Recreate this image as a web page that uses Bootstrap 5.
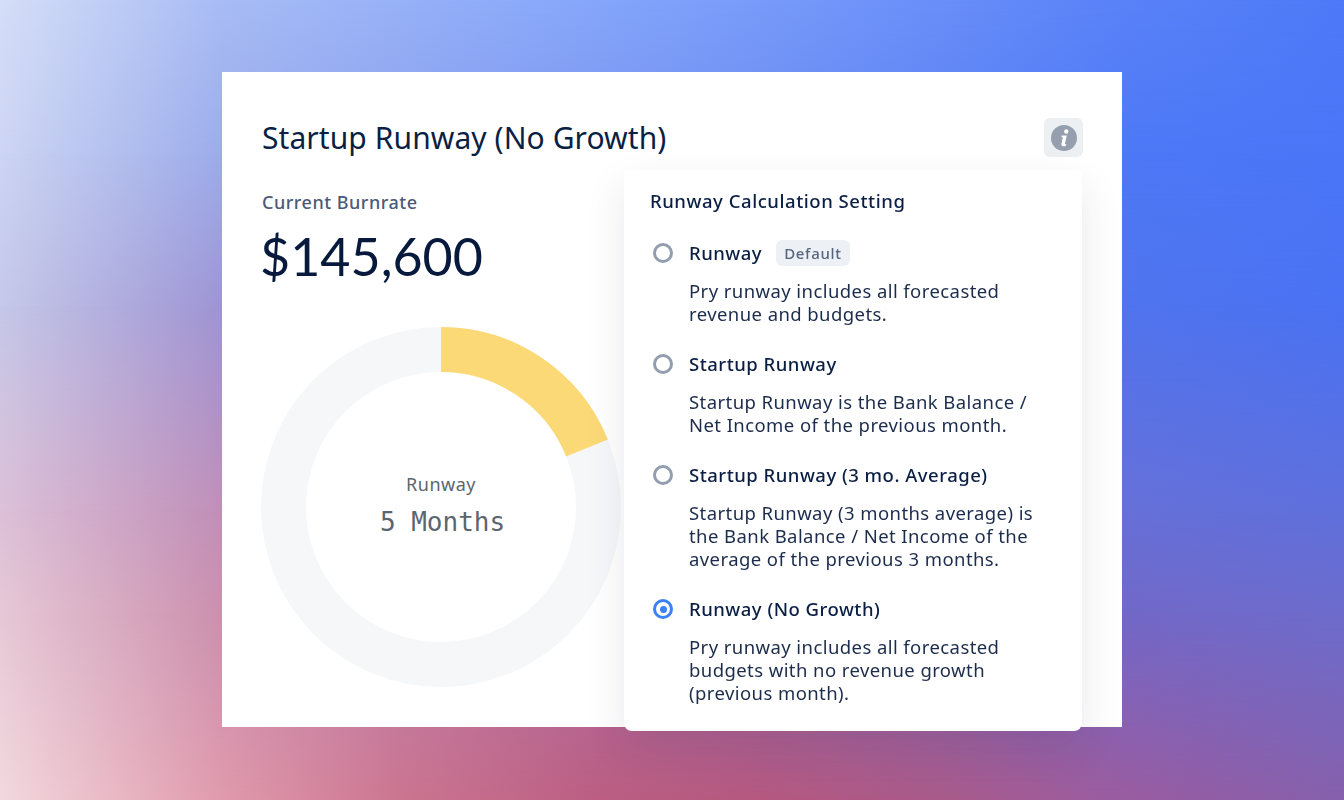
<!DOCTYPE html>
<html lang="en">
<head>
<meta charset="UTF-8">
<title>Startup Runway</title>
<link href="https://cdn.jsdelivr.net/npm/bootstrap@5.3.1/dist/css/bootstrap.min.css" rel="stylesheet">
<style>
    html, body { height: 100%; }
    body {
        font-family: "Noto Sans", "Liberation Sans", sans-serif;
        color: #0b1f44;
        overflow: hidden;
        background: linear-gradient(90deg, #d5def7 0, #a8bcf5 222px, #85a6fb 600px, #5a82f8 1122px, #4d7af8 1344px);
    }
    /* backdrop: colour rows faded into each other top to bottom */
    .bg-row { position: fixed; inset: 0; }
    .bg-row.r1 {
        background: linear-gradient(90deg, #cdd5f3 0, #9cacea 222px, #7a94ee 600px, #4d78f6 1122px, #4a76f7 1344px);
        -webkit-mask-image: linear-gradient(180deg, transparent 0, #000 153px);
        mask-image: linear-gradient(180deg, transparent 0, #000 153px);
    }
    .bg-row.r2 {
        background: linear-gradient(90deg, #c5c8e8 0, #9e94d4 222px, #7a80dc 600px, #5074ee 1122px, #4a72f3 1344px);
        -webkit-mask-image: linear-gradient(180deg, transparent 153px, #000 306px);
        mask-image: linear-gradient(180deg, transparent 153px, #000 306px);
    }
    .bg-row.r3 {
        background: linear-gradient(90deg, #dcc0d8 0, #c08fb8 222px, #9a70b8 600px, #6670d8 1122px, #5f70dc 1344px);
        -webkit-mask-image: linear-gradient(180deg, transparent 306px, #000 510px);
        mask-image: linear-gradient(180deg, transparent 306px, #000 510px);
    }
    .bg-row.r4 {
        background: linear-gradient(90deg, #e6c8d6 0, #cb90ae 222px, #ae6aa0 600px, #7268c8 1122px, #6d6ccc 1344px);
        -webkit-mask-image: linear-gradient(180deg, transparent 510px, #000 612px);
        mask-image: linear-gradient(180deg, transparent 510px, #000 612px);
    }
    .bg-row.r5 {
        background: linear-gradient(90deg, #f2d8de 0, #e09aad 222px, #cb7590 400px, #bb5e82 600px, #b4587f 760px, #a85a8a 950px, #9a5ca0 1122px, #8660ac 1344px);
        -webkit-mask-image: linear-gradient(180deg, transparent 612px, #000 800px);
        mask-image: linear-gradient(180deg, transparent 612px, #000 800px);
    }
    .sheet {
        position: relative;
        width: 900px;
        height: 655px;
        margin: 72px auto 0;
        background: #fff;
        padding: 46px 39px 0 40px;
    }
    .sheet-title { font-size: 30px; line-height: 39px; font-weight: 400; letter-spacing: .08px; margin: 0; }
    .info-btn {
        width: 39px; height: 39px; border: 0; padding: 0;
        background: #edf0f3; border-radius: 6px;
    }
    .burn-label { font-size: 18px; line-height: 24px; color: #4a5a78; font-weight: 500; letter-spacing: .5px; margin-top: 33px; }
    .burn-value { font-family: Lato, "Liberation Sans", sans-serif; font-size: 52px; line-height: 66px; margin-top: 9px; margin-left: -2px; color: #071a3e; }
    .donut-box { position: relative; width: 360px; height: 360px; margin-top: 38px; margin-left: -1px; }
    .donut-text { position: absolute; inset: 0; text-align: center; color: #5b6670; padding-top: 145px; }
    .donut-name { font-size: 18px; line-height: 24px; letter-spacing: .5px; }
    .donut-months { font-family: "DejaVu Sans Mono", "Liberation Mono", monospace; font-size: 26px; line-height: 34px; margin-top: 9px; padding-left: 3px; }
    .setting-pop {
        position: absolute; left: 402px; top: 98px; width: 458px; height: 561px;
        background: #fff; border-radius: 0 0 8px 8px; padding: 18px 26px;
        box-shadow: 0 16px 40px rgba(40,40,70,.1);
    }
    .pop-title { font-size: 18.5px; line-height: 26px; font-weight: 500; letter-spacing: .54px; margin-bottom: 27px; }
    .opt-item { display: flex; gap: 16px; }
    .opt-dot { flex: none; width: 20px; height: 20px; margin-top: 2px; margin-left: 3px; border-radius: 50%; border: 3.5px solid #929dae; background: #fff; }
    .opt-dot.on { border-color: #3b82f6; display: flex; align-items: center; justify-content: center; }
    .opt-dot.on::after { content: ""; width: 7px; height: 7px; border-radius: 50%; background: #3b82f6; }
    .opt-name { display: flex; align-items: center; height: 24px; font-size: 18.5px; font-weight: 500; letter-spacing: .49px; }
    .opt-tag { font-size: 15px; line-height: 26px; letter-spacing: .7px; padding: 0 8px; border-radius: 6px; background: #edf0f5; color: #55647f; font-weight: 500; margin-left: 14px; }
    .opt-desc { font-size: 18.5px; line-height: 23px; letter-spacing: .42px; margin-top: 14px; color: #1c2c4c; }
    .opt-gap { margin-top: 27px; }
</style>
</head>
<body>
<div class="bg-row r1"></div>
<div class="bg-row r2"></div>
<div class="bg-row r3"></div>
<div class="bg-row r4"></div>
<div class="bg-row r5"></div>
<div class="sheet">
    <div class="d-flex justify-content-between align-items-center">
        <h1 class="sheet-title">Startup Runway (No Growth)</h1>
        <button class="info-btn d-flex align-items-center justify-content-center" type="button" aria-label="Info">
            <svg width="26" height="26" viewBox="0 0 26 26">
                <circle cx="13" cy="13" r="13" fill="#959fae"/>
                <circle cx="15.3" cy="6.5" r="2.2" fill="#fff"/>
                <path d="M10.6 10.6h5.2l-1.9 8.2c-.1.5.5.7 1.4.3l-.3 1.6c-2.8 1.1-5 .6-4.6-1.7l1.4-6.6-1.2-.2z" fill="#fff"/>
            </svg>
        </button>
    </div>
    <div class="burn-label">Current Burnrate</div>
    <div class="burn-value">$145,600</div>
    <div class="donut-box">
        <svg width="360" height="360" viewBox="0 0 360 360">
            <circle cx="180" cy="180" r="157.5" fill="none" stroke="#f6f7f9" stroke-width="45"/>
            <path d="M180 22.5 A157.5 157.5 0 0 1 326 121" fill="none" stroke="#fcd977" stroke-width="45"/>
        </svg>
        <div class="donut-text">
            <div class="donut-name">Runway</div>
            <div class="donut-months">5 Months</div>
        </div>
    </div>
    <div class="setting-pop">
        <div class="pop-title">Runway Calculation Setting</div>
        <div class="opt-item">
            <span class="opt-dot"></span>
            <div>
                <div class="opt-name">Runway <span class="opt-tag">Default</span></div>
                <div class="opt-desc">Pry runway includes all forecasted<br>revenue and budgets.</div>
            </div>
        </div>
        <div class="opt-item opt-gap">
            <span class="opt-dot"></span>
            <div>
                <div class="opt-name">Startup Runway</div>
                <div class="opt-desc">Startup Runway is the Bank Balance /<br>Net Income of the previous month.</div>
            </div>
        </div>
        <div class="opt-item opt-gap">
            <span class="opt-dot"></span>
            <div>
                <div class="opt-name">Startup Runway (3 mo. Average)</div>
                <div class="opt-desc">Startup Runway (3 months average) is<br>the Bank Balance / Net Income of the<br>average of the previous 3 months.</div>
            </div>
        </div>
        <div class="opt-item opt-gap">
            <span class="opt-dot on"></span>
            <div>
                <div class="opt-name">Runway (No Growth)</div>
                <div class="opt-desc">Pry runway includes all forecasted<br>budgets with no revenue growth<br>(previous month).</div>
            </div>
        </div>
    </div>
</div>
<script src="https://cdn.jsdelivr.net/npm/bootstrap@5.3.1/dist/js/bootstrap.bundle.min.js"></script>
</body>
</html>
